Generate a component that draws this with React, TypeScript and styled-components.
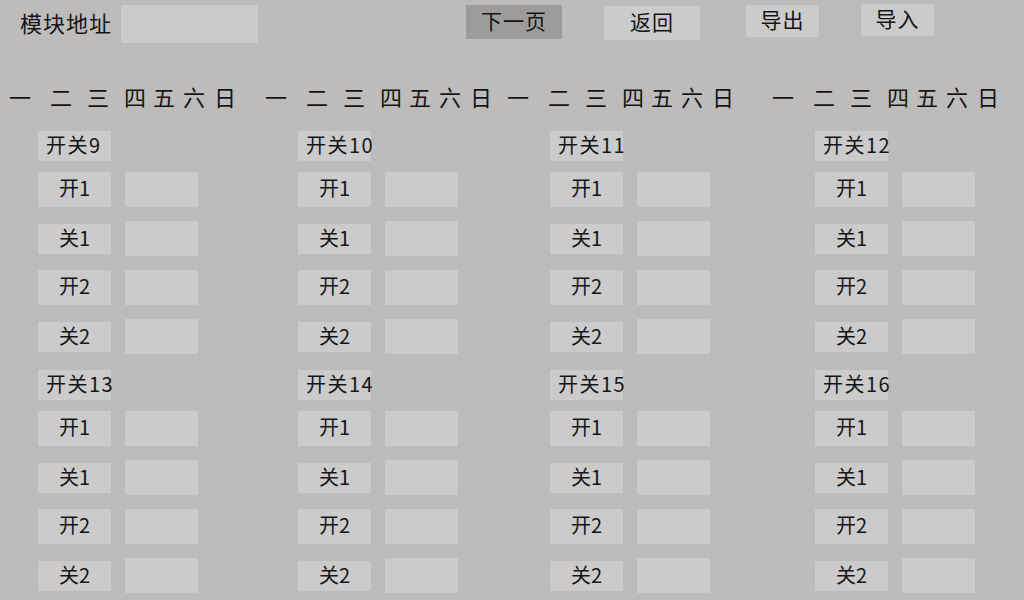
import React from "react";
import styled, { createGlobalStyle } from "styled-components";

const GlobalStyle = createGlobalStyle`
	html, body {
		margin: 0;
		padding: 0;
		background: #bdbcba;
	}
	body {
		font-family: "Noto Sans CJK SC", "Noto Sans", sans-serif;
		color: #151515;
	}
	* {
		box-sizing: border-box;
	}
`;

const Page = styled.div`
	width: 1024px;
	height: 600px;
	overflow: hidden;
	background: #bdbcba;
`;

const TopBar = styled.div`
	display: flex;
	align-items: flex-start;
	height: 48px;
	padding: 5px 0 0 20px;
`;
const AddrLabel = styled.span`
	font-size: 22px;
	line-height: 34px;
	letter-spacing: 1px;
	margin-right: 9px;
`;
const AddrInput = styled.input`
	width: 137px;
	height: 38px;
	border: 0;
	outline: none;
	padding: 0;
	background: #cbcbcb;
`;
const ToolButton = styled.button<{ $w: number; $h: number; $ml: number; $mt: number; $dark?: boolean }>`
	width: ${(p) => p.$w}px;
	height: ${(p) => p.$h}px;
	margin-left: ${(p) => p.$ml}px;
	margin-top: ${(p) => p.$mt}px;
	border: 0;
	padding: 0 0 4px;
	background: ${(p) => (p.$dark ? "#9d9c9a" : "#cbcbcb")};
	font-family: inherit;
	font-size: 21px;
	letter-spacing: 1px;
	color: #151515;
	line-height: ${(p) => p.$h - 4}px;
`;

const Weekdays = styled.div`
	display: flex;
	margin-top: 37px;
	padding-left: 9px;
	font-size: 22px;
	line-height: 22px;
`;
const DayGroup = styled.div<{ $w?: number }>`
	display: flex;
	width: ${(p) => (p.$w ? `${p.$w}px` : "auto")};
`;
const Day = styled.span<{ $w: number }>`
	width: ${(p) => p.$w}px;
`;

const Grid = styled.div`
	display: grid;
	grid-template-columns: 260px 252px 265px 1fr;
	row-gap: 16px;
	margin-top: 24px;
	padding-left: 38px;
`;
const Section = styled.div`
	display: flex;
	flex-direction: column;
`;
const SwitchTitle = styled.div`
	width: 73px;
	height: 30px;
	margin-bottom: 11px;
	padding-left: 8px;
	background: #cbcbcb;
	font-size: 20px;
	line-height: 28px;
	letter-spacing: 1.5px;
	white-space: nowrap;
`;
const Rows = styled.div`
	display: flex;
	flex-direction: column;
	gap: 14px;
`;
const Row = styled.div`
	display: flex;
	align-items: center;
	gap: 14px;
	height: 35px;
`;
const RowLabel = styled.div<{ $short?: boolean }>`
	width: 73px;
	height: ${(p) => (p.$short ? 30 : 35)}px;
	background: #cbcbcb;
	font-size: 20px;
	line-height: ${(p) => (p.$short ? 27 : 32)}px;
	text-align: center;
`;
const RowInput = styled.input`
	width: 73px;
	height: 35px;
	border: 0;
	outline: none;
	padding: 0;
	background: #cbcbcb;
`;

const days = ["一", "二", "三", "四", "五", "六", "日"];
const dayWidths = [41, 37, 37, 29, 30, 31, 22];
const groupWidths = [256, 242, 265, undefined];
const actions = ["开1", "关1", "开2", "关2"];
const switches = [9, 10, 11, 12, 13, 14, 15, 16];

function SwitchBlock({ n }: { n: number }) {
	return (
		<Section>
			<SwitchTitle>开关{n}</SwitchTitle>
			<Rows>
				{actions.map((a) => (
					<Row key={a}>
						<RowLabel $short={a.startsWith("关")}>{a}</RowLabel>
						<RowInput />
					</Row>
				))}
			</Rows>
		</Section>
	);
}

export default function App() {
	return (
		<Page>
			<GlobalStyle />
			<TopBar>
				<AddrLabel>模块地址</AddrLabel>
				<AddrInput />
				<ToolButton $dark $w={96} $h={34} $ml={208} $mt={0}>
					下一页
				</ToolButton>
				<ToolButton $w={96} $h={34} $ml={42} $mt={1}>
					返回
				</ToolButton>
				<ToolButton $w={73} $h={32} $ml={46} $mt={0}>
					导出
				</ToolButton>
				<ToolButton $w={73} $h={32} $ml={42} $mt={-1}>
					导入
				</ToolButton>
			</TopBar>

			<Weekdays>
				{groupWidths.map((gw, g) => (
					<DayGroup key={g} $w={gw}>
						{days.map((d, i) => (
							<Day key={d} $w={dayWidths[i]}>
								{d}
							</Day>
						))}
					</DayGroup>
				))}
			</Weekdays>

			<Grid>
				{switches.map((n) => (
					<SwitchBlock key={n} n={n} />
				))}
			</Grid>
		</Page>
	);
}
